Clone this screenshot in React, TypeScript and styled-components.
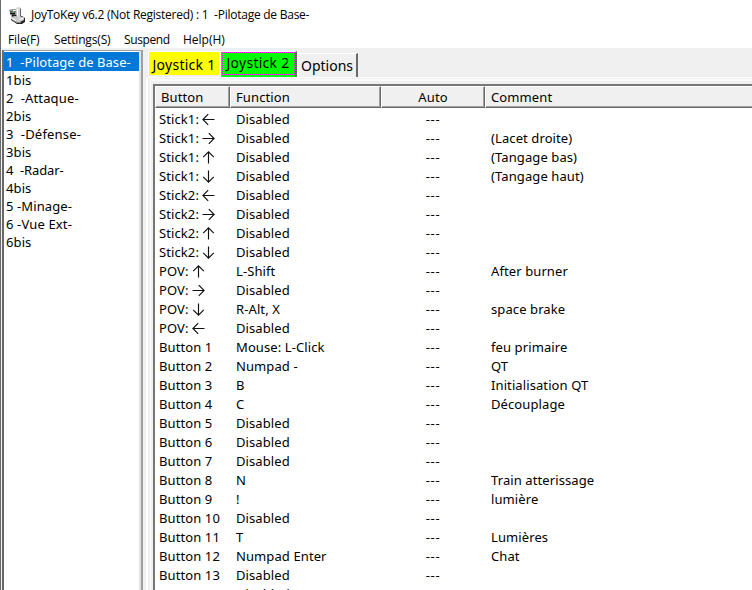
import React from 'react';
import styled, { createGlobalStyle } from 'styled-components';

const Global = createGlobalStyle`
  *, *::before, *::after { box-sizing: border-box; }
  body { margin: 0; overflow: hidden; background: #fff; }
`;

const Window = styled.div`
  width: 752px;
  height: 590px;
  overflow: hidden;
  display: flex;
  flex-direction: column;
  background: #f0f0f0;
  border-left: 1px solid #6b6b6b;
  color: #000;
  font: 13px/19px 'Noto Sans', 'Open Sans', sans-serif;
  white-space: pre;
`;

const TitleBar = styled.header`
  height: 30px;
  flex: none;
  display: flex;
  align-items: center;
  gap: 5px;
  padding-left: 8px;
  background: #fff;
  font: 12px/30px 'Open Sans', sans-serif;
`;

const Title = styled.h1`
  margin: 0;
  font: inherit;
  letter-spacing: -0.25px;
`;

const MenuBar = styled.nav`
  height: 18px;
  flex: none;
  display: flex;
  padding-left: 7px;
  background: #fff;
  font: 12px/19px 'Open Sans', sans-serif;
`;

const MenuItem = styled.span<{ $width: number; $tracking: number }>`
  width: ${(p) => p.$width}px;
  letter-spacing: ${(p) => p.$tracking}px;
`;

const Body = styled.main`
  flex: 1;
  min-height: 0;
  display: flex;
  padding-left: 1px;
`;

const Profiles = styled.ul`
  width: 141px;
  height: 560px;
  flex: none;
  margin: 2px 0 0;
  padding: 1px 0 0;
  list-style: none;
  background: #fff;
  border-top: 1px solid #a0a0a0;
  border-left: 2px solid #696969;
  border-right: 2px solid #a0a0a0;
  box-shadow: inset -2px 0 #e3e3e3;
`;

const Profile = styled.li<{ $selected?: boolean; $tracking: number }>`
  width: 135px;
  height: ${(p) => (p.$selected ? 19 : 18)}px;
  padding-left: 2px;
  line-height: ${(p) => (p.$selected ? 20 : 18)}px;
  letter-spacing: ${(p) => p.$tracking}px;
  color: ${(p) => (p.$selected ? '#fff' : '#000')};
  background: ${(p) => (p.$selected ? '#0078d7' : 'transparent')};
`;

const Workspace = styled.section`
  flex: 1;
  min-width: 0;
  display: flex;
  flex-direction: column;
  padding-left: 3px;
`;

const Tabs = styled.div`
  height: 29px;
  flex: none;
  display: flex;
  align-items: flex-end;
  padding-left: 2px;
`;

const Tab = styled.div<{ $fill: string; $width: number; $kind: 'back' | 'front' | 'plain' }>`
  width: ${(p) => p.$width}px;
  height: ${(p) => (p.$kind === 'front' ? 26 : 24)}px;
  display: flex;
  align-items: center;
  justify-content: center;
  background: ${(p) => p.$fill};
  border: 1px solid #fff;
  border-bottom: 0;
  border-right: ${(p) => (p.$kind === 'back' ? '1px solid #fff' : '2px solid #696969')};
  margin-bottom: ${(p) => (p.$kind === 'back' ? 2 : 0)}px;
  padding-top: ${(p) => (p.$kind === 'back' ? 2 : 0)}px;
  font-size: 14px;
  letter-spacing: ${(p) => (p.$kind === 'plain' ? 0 : 0.28)}px;
`;

const Focus = styled.span`
  width: 73px;
  height: 23px;
  margin-bottom: 2px;
  border: 1px dotted #ff00ff;
  text-align: center;
  line-height: 20px;
`;

const Page = styled.div`
  flex: 1;
  min-height: 0;
  border-top: 1px solid #fff;
  border-left: 2px solid #fff;
  padding: 1px 0 0 2px;
`;

const PageInner = styled.div`
  height: 520px;
  border-top: 2px solid #fafafa;
  border-left: 1px solid #fafafa;
  padding: 3px 0 0 2px;
`;

const Table = styled.div`
  height: 510px;
  background: #fff;
  border-top: 2px solid #777;
  border-left: 2px solid #777;
`;

const columns = '75px 151px 104px 300px';

const HeaderRow = styled.div`
  display: grid;
  grid-template-columns: ${columns};
  height: 21px;
  margin-bottom: 3px;
`;

const HeaderCell = styled.div<{ $center?: boolean }>`
  padding-left: ${(p) => (p.$center ? 0 : 5)}px;
  text-align: ${(p) => (p.$center ? 'center' : 'left')};
  line-height: 20px;
  letter-spacing: 0.12px;
  background: #f0f0f0;
  border: 1px solid #fff;
  border-right-color: #696969;
  border-bottom-color: #696969;
  box-shadow: inset -1px -1px #a0a0a0;
`;

const Row = styled.div`
  display: grid;
  grid-template-columns: ${columns};
  height: 19px;
`;

const Cell = styled.div<{ $kind?: 'name' | 'auto' }>`
  display: flex;
  align-items: center;
  padding-left: ${(p) => (p.$kind === 'name' ? 4 : p.$kind === 'auto' ? 0 : 6)}px;
  justify-content: ${(p) => (p.$kind === 'auto' ? 'center' : 'flex-start')};
  letter-spacing: ${(p) => (p.$kind === 'auto' ? 0.7 : 0.1)}px;
`;

const ArrowSvg = styled.svg`
  margin-left: 3px;
  flex: none;
`;

const turns: Record<string, number> = { left: 0, up: 90, right: 180, down: 270 };

const Arrow = ({ dir }: { dir: string }) => (
  <ArrowSvg width="13" height="13" viewBox="0 0 13 13">
    <path
      d="M1 6.5H12.5M6.2 1.2L0.9 6.5L6.2 11.8"
      fill="none"
      stroke="#111"
      strokeWidth="1.15"
      transform={`rotate(${turns[dir]} 6.5 6.5)`}
    />
  </ArrowSvg>
);

const AppIcon = () => (
  <svg width="17" height="17" viewBox="0 0 17 17">
    <path d="M0 3L3 2L7 2L8 7L6 9H2Z" fill="#9b9b9b" />
    <path d="M1 6.5H6M3 8.5H7" stroke="#111" strokeWidth="1.4" />
    <path d="M1 4.5H3.5" stroke="#555" />
    <path d="M4 3.5H7" stroke="#eee" />
    <path d="M5 4.5H7" stroke="#24a34a" />
    <path d="M2 10L5 8L13 9L16 11V15L13 17H8L2 13Z" fill="#242424" />
    <path d="M2 10L6 9L15 10V13L11 15H7L2 12Z" fill="#c9c9c9" />
    <path d="M7 1L9 0H11L12 2V9L10 11L8 10Z" fill="#d8d8d8" />
    <path d="M8.5 2V9" stroke="#fff" />
    <path d="M11.5 1.5V9" stroke="#666" />
    <path d="M3 11.5L7 13.5M10 12.5L14 11.5" stroke="#fff" />
    <path d="M4 13.5L8 15.5H12" stroke="#888" fill="none" />
  </svg>
);

const profiles: [string, number][] = [
  ['1  -Pilotage de Base-', 0.05],
  ['1bis', 0.1],
  ['2  -Attaque-', 0.15],
  ['2bis', 0.1],
  ['3  -Défense-', 0.2],
  ['3bis', 0.1],
  ['4  -Radar-', -0.1],
  ['4bis', 0.1],
  ['5 -Minage-', 0.1],
  ['6 -Vue Ext-', 0.15],
  ['6bis', 0.1],
];

type Binding = { name: string; dir?: string; fn: string; comment?: string };

const bindings: Binding[] = [
  { name: 'Stick1:', dir: 'left', fn: 'Disabled' },
  { name: 'Stick1:', dir: 'right', fn: 'Disabled', comment: '(Lacet droite)' },
  { name: 'Stick1:', dir: 'up', fn: 'Disabled', comment: '(Tangage bas)' },
  { name: 'Stick1:', dir: 'down', fn: 'Disabled', comment: '(Tangage haut)' },
  { name: 'Stick2:', dir: 'left', fn: 'Disabled' },
  { name: 'Stick2:', dir: 'right', fn: 'Disabled' },
  { name: 'Stick2:', dir: 'up', fn: 'Disabled' },
  { name: 'Stick2:', dir: 'down', fn: 'Disabled' },
  { name: 'POV:', dir: 'up', fn: 'L-Shift', comment: 'After burner' },
  { name: 'POV:', dir: 'right', fn: 'Disabled' },
  { name: 'POV:', dir: 'down', fn: 'R-Alt, X', comment: 'space brake' },
  { name: 'POV:', dir: 'left', fn: 'Disabled' },
  { name: 'Button 1', fn: 'Mouse: L-Click', comment: 'feu primaire' },
  { name: 'Button 2', fn: 'Numpad -', comment: 'QT' },
  { name: 'Button 3', fn: 'B', comment: 'Initialisation QT' },
  { name: 'Button 4', fn: 'C', comment: 'Découplage' },
  { name: 'Button 5', fn: 'Disabled' },
  { name: 'Button 6', fn: 'Disabled' },
  { name: 'Button 7', fn: 'Disabled' },
  { name: 'Button 8', fn: 'N', comment: 'Train atterissage' },
  { name: 'Button 9', fn: '!', comment: 'lumière' },
  { name: 'Button 10', fn: 'Disabled' },
  { name: 'Button 11', fn: 'T', comment: 'Lumières' },
  { name: 'Button 12', fn: 'Numpad Enter', comment: 'Chat' },
  { name: 'Button 13', fn: 'Disabled' },
  { name: 'Button 14', fn: 'Disabled' },
];

export default function App() {
  return (
    <>
      <Global />
      <Window>
        <TitleBar>
          <AppIcon />
          <Title>JoyToKey v6.2 (Not Registered) : 1  -Pilotage de Base-</Title>
        </TitleBar>
        <MenuBar>
          <MenuItem $width={46} $tracking={-0.1}>File(F)</MenuItem>
          <MenuItem $width={70} $tracking={-0.15}>Settings(S)</MenuItem>
          <MenuItem $width={59} $tracking={-0.4}>Suspend</MenuItem>
          <MenuItem $width={60} $tracking={0}>Help(H)</MenuItem>
        </MenuBar>
        <Body>
          <Profiles>
            {profiles.map(([label, tracking], i) => (
              <Profile key={label} $selected={i === 0} $tracking={tracking}>{label}</Profile>
            ))}
          </Profiles>
          <Workspace>
            <Tabs>
              <Tab $kind="back" $fill="#ffff00" $width={72}>Joystick 1</Tab>
              <Tab $kind="front" $fill="#00ff00" $width={77}><Focus>Joystick 2</Focus></Tab>
              <Tab $kind="plain" $fill="#f0f0f0" $width={61}>Options</Tab>
            </Tabs>
            <Page>
              <PageInner>
                <Table>
                  <HeaderRow>
                    <HeaderCell>Button</HeaderCell>
                    <HeaderCell>Function</HeaderCell>
                    <HeaderCell $center>Auto</HeaderCell>
                    <HeaderCell>Comment</HeaderCell>
                  </HeaderRow>
                  {bindings.map((b, i) => (
                    <Row key={i}>
                      <Cell $kind="name">{b.name}{b.dir && <Arrow dir={b.dir} />}</Cell>
                      <Cell>{b.fn}</Cell>
                      <Cell $kind="auto">---</Cell>
                      <Cell>{b.comment}</Cell>
                    </Row>
                  ))}
                </Table>
              </PageInner>
            </Page>
          </Workspace>
        </Body>
      </Window>
    </>
  );
}
